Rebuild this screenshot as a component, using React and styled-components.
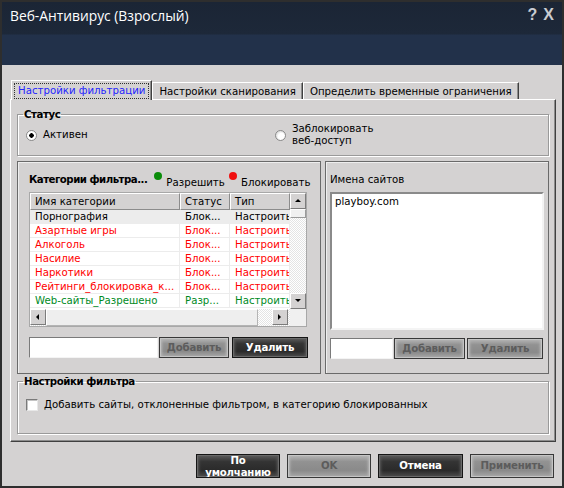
import React from 'react';
import styled, { createGlobalStyle } from 'styled-components';

const GlobalStyle = createGlobalStyle`
  html, body {
    margin: 0;
    padding: 0;
    background: #d4d2d2;
  }
  body {
    font-family: "DejaVu Sans", Verdana, sans-serif;
    font-size: 10.2px;
    color: #000;
  }
  * {
    box-sizing: border-box;
  }
`;

const Window = styled.div`
  width: 564px;
  height: 488px;
  border: 2px solid #2e2e2e;
  background: #d4d2d2;
  display: flex;
  flex-direction: column;
  overflow: hidden;
`;

const TitleBar = styled.div`
  height: 63px;
  flex-shrink: 0;
  background: linear-gradient(180deg, #1b2535 0, #1d2839 32px, #22314a 33px, #22314a 100%);
  display: flex;
  justify-content: space-between;
  align-items: flex-start;
  padding: 4px 8px 0 8px;
`;

const Title = styled.div`
  font-family: "Open Sans", "Noto Sans", sans-serif;
  font-size: 13.8px;
  line-height: 20px;
  color: #ffffff;
`;

const TitleButtons = styled.div`
  display: flex;
  gap: 6px;
  font-family: "Liberation Sans", Arial, sans-serif;
  font-weight: 700;
  font-size: 16px;
  line-height: 16px;
  color: #c9ccd1;
  padding-top: 1px;
`;

const Body = styled.div`
  flex: 1;
  display: flex;
  flex-direction: column;
  padding: 15px 6px 0 8px;
`;

const TabRow = styled.div`
  display: flex;
  align-items: flex-end;
  height: 19px;
  padding-left: 1px;
  position: relative;
  z-index: 1;
`;

const Tab = styled.div`
  height: ${(p) => (p.$active ? '20px' : '17px')};
  margin-bottom: ${(p) => (p.$active ? '-1px' : '0')};
  padding: ${(p) => (p.$active ? '1px 2px 0 2px' : '0 6px')};
  display: flex;
  align-items: center;
  background: #d4d2d2;
  border-top: 1px solid #ffffff;
  border-left: 1px solid #ffffff;
  border-right: 1px solid #404040;
  box-shadow: inset -1px 0 0 #8c8c8c;
  color: ${(p) => (p.$active ? '#2424ff' : '#000')};
  white-space: nowrap;
`;

const FocusText = styled.span`
  border: 1px dotted #303030;
  padding: 1px 3px 2px 3px;
`;

const TabPanel = styled.div`
  height: 343px;
  display: flex;
  flex-direction: column;
  padding: 8px 6px 0 6px;
  border-top: 1px solid #ffffff;
  border-left: 1px solid #ffffff;
  border-right: 1px solid #404040;
  border-bottom: 1px solid #404040;
  box-shadow: inset -1px -1px 0 #8c8c8c;
`;

const Group = styled.fieldset`
  margin: ${(p) => p.$top || 0}px 0 0 0;
  padding: ${(p) => p.$pad};
  border: 1px solid #9a9a9a;
  box-shadow: inset 1px 1px 0 #ffffff, 1px 1px 0 #ffffff;
  min-width: 0;
`;

const Legend = styled.legend`
  font-weight: 700;
  letter-spacing: -0.4px;
  line-height: 13px;
  padding: 0 1px;
  margin-left: -3px;
`;

const RadioRow = styled.div`
  display: grid;
  grid-template-columns: 249px 1fr;
  align-items: center;
  height: 24px;
`;

const RadioLabel = styled.label`
  display: flex;
  align-items: center;
  gap: 6px;
  line-height: 12px;
`;

const Radio = styled.span`
  width: 11px;
  height: 11px;
  border-radius: 50%;
  border: 1px solid #8a8a8a;
  background: ${(p) =>
    p.$checked
      ? 'radial-gradient(circle, #000 0 2px, #fff 2.5px)'
      : 'radial-gradient(circle at 60% 60%, #fff 0 3px, #e4e4e4 5px)'};
  flex-shrink: 0;
`;

const Panels = styled.div`
  display: flex;
  gap: 4px;
  margin-top: 5px;
  height: 213px;
`;

const Panel = styled.div`
  width: ${(p) => (p.$width ? `${p.$width}px` : 'auto')};
  flex: ${(p) => (p.$width ? '0 0 auto' : '1')};
  border: 1px solid #6a6a6a;
  box-shadow: inset 1px 1px 0 #eeeeee;
  display: flex;
  flex-direction: column;
  padding: 0 ${(p) => p.$side}px;
`;

const PanelHeader = styled.div`
  height: 30px;
  display: flex;
  align-items: flex-start;
  padding-top: 11px;
  line-height: 13px;
  white-space: nowrap;
`;

const HeaderTitle = styled.div`
  width: 131px;
  font-weight: ${(p) => (p.$bold ? 700 : 400)};
  letter-spacing: ${(p) => (p.$bold ? '-0.5px' : '0')};
`;

const LegendItem = styled.div`
  display: flex;
  align-items: flex-start;
  width: ${(p) => p.$width}px;
  margin-top: -1px;
`;

const Dot = styled.span`
  width: 8px;
  height: 8px;
  border-radius: 50%;
  background: ${(p) => p.$color};
  margin-right: 4px;
  flex-shrink: 0;
`;

const LegendText = styled.span`
  margin-top: 4px;
`;

const Table = styled.div`
  width: 278px;
  height: 135px;
  border: 1px solid #a8a8a8;
  background: #ffffff;
  display: grid;
  grid-template-columns: 260px 16px;
  grid-template-rows: 116px 17px;
`;

const DataArea = styled.div`
  display: flex;
  flex-direction: column;
  overflow: hidden;
`;

const HeadRow = styled.div`
  display: grid;
  grid-template-columns: 150px 50px 60px;
  height: 17px;
`;

const HeadCell = styled.div`
  background: #d4d2d2;
  border-top: 1px solid #ffffff;
  border-left: 1px solid #ffffff;
  border-right: 1px solid #8c8c8c;
  border-bottom: 1px solid #8c8c8c;
  padding-left: 4px;
  line-height: 15px;
  white-space: nowrap;
  overflow: hidden;
`;

const Row = styled.div`
  display: grid;
  grid-template-columns: 150px 50px 60px;
  height: 14px;
  background: ${(p) => (p.$selected ? '#ececec' : '#ffffff')};
  color: ${(p) => p.$color};
  border-bottom: 1px solid #ececec;
`;

const Cell = styled.div`
  padding-left: 5px;
  line-height: 13px;
  white-space: nowrap;
  overflow: hidden;
  border-right: 1px solid #ececec;
`;

const VScroll = styled.div`
  display: flex;
  flex-direction: column;
  background: repeating-conic-gradient(#e4e4e4 0 25%, #ffffff 0 50%) 0 0 / 2px 2px;
`;

const ScrollButton = styled.div`
  width: 16px;
  height: 16px;
  flex-shrink: 0;
  background: #d4d2d2;
  border: 1px solid;
  border-color: #ffffff #7c7c7c #7c7c7c #ffffff;
  display: flex;
  align-items: center;
  justify-content: center;
`;

const VThumb = styled.div`
  height: 9px;
  flex-shrink: 0;
  background: #f0f0f0;
  border: 1px solid;
  border-color: #ffffff #9a9a9a #9a9a9a #ffffff;
`;

const Spacer = styled.div`
  flex: 1;
`;

const HScroll = styled.div`
  display: flex;
  align-items: stretch;
  background: repeating-conic-gradient(#e4e4e4 0 25%, #ffffff 0 50%) 0 0 / 2px 2px;
  padding-right: 2px;
`;

const HThumb = styled.div`
  flex: 0 0 212px;
  background: #eeeeee;
  border: 1px solid;
  border-color: #ffffff #b4b4b4 #b4b4b4 #ffffff;
`;

const Corner = styled.div`
  background: #f0f0f0;
`;

const ControlRow = styled.div`
  display: flex;
  margin-top: ${(p) => p.$top}px;
  height: 21px;
`;

const TextInput = styled.input`
  width: ${(p) => p.$width}px;
  height: 21px;
  margin: 0;
  border: 1px solid;
  border-color: #7a7a7a #f4f4f4 #f4f4f4 #7a7a7a;
  background: #ffffff;
  padding: 0 3px;
`;

const Button = styled.button`
  width: ${(p) => p.$width}px;
  margin: 0 0 0 ${(p) => p.$gap || 0}px;
  padding: 0;
  font-family: "DejaVu Sans", Verdana, sans-serif;
  font-size: 10.2px;
  font-weight: 700;
  letter-spacing: -0.2px;
  line-height: 12px;
  border: 1px solid ${(p) => (p.$dark ? '#151515' : '#383838')};
  color: ${(p) => (p.$dark ? '#ffffff' : '#5c5c5c')};
  background: ${(p) =>
    p.$dark
      ? 'linear-gradient(180deg, #5e5e5e 0, #343434 30%, #2a2a2a 70%, #4e4e4e 100%)'
      : 'linear-gradient(180deg, #b8b8b8 0, #929292 30%, #8a8a8a 70%, #a8a8a8 100%)'};
  box-shadow: ${(p) =>
    p.$dark
      ? 'inset 0 0 0 1px #6a6a6a, inset 3px 0 3px -1px #5a5a5a, inset -3px 0 3px -1px #5a5a5a'
      : 'inset 0 0 0 1px #c4c4c4, inset 3px 0 3px -1px #b8b8b8, inset -3px 0 3px -1px #b8b8b8'};
  overflow: hidden;
`;

const SiteList = styled.div`
  height: 138px;
  background: #ffffff;
  border: 2px solid;
  border-color: #8a8a8a #f4f4f4 #f4f4f4 #8a8a8a;
  padding: 1px 3px;
  line-height: 14px;
`;

const CheckLabel = styled.label`
  display: flex;
  align-items: center;
  gap: 6px;
  line-height: 13px;
`;

const CheckBox = styled.span`
  width: 12px;
  height: 12px;
  background: #ffffff;
  border: 1px solid;
  border-color: #7a7a7a #e8e8e8 #e8e8e8 #7a7a7a;
  box-shadow: inset 1px 1px 0 #c4c4c4;
  flex-shrink: 0;
`;

const Footer = styled.div`
  display: flex;
  justify-content: flex-end;
  gap: 7px;
  margin-top: 12px;
  padding-right: 2px;
  height: 24px;
`;

const Arrow = ({ dir }) => {
  const pts = {
    up: '1,5 4,2 7,5',
    down: '1,2 4,5 7,2',
    left: '5,1 2,4 5,7',
    right: '2,1 5,4 2,7',
  };
  return (
    <svg width="8" height="8" viewBox="0 0 8 8">
      <polygon points={pts[dir]} fill="#000" />
    </svg>
  );
};

const rows = [
  { name: 'Порнография', status: 'Блок...', color: '#000', selected: true },
  { name: 'Азартные игры', status: 'Блок...', color: '#ff0000' },
  { name: 'Алкоголь', status: 'Блок...', color: '#ff0000' },
  { name: 'Насилие', status: 'Блок...', color: '#ff0000' },
  { name: 'Наркотики', status: 'Блок...', color: '#ff0000' },
  { name: 'Рейтинги_блокировка_к...', status: 'Блок...', color: '#ff0000' },
  { name: 'Web-сайты_Разрешено', status: 'Разр...', color: '#008a1e' },
];

function App() {
  return (
    <>
      <GlobalStyle />
      <Window>
        <TitleBar>
          <Title>Веб-Антивирус (Взрослый)</Title>
          <TitleButtons>
            <span>?</span>
            <span>X</span>
          </TitleButtons>
        </TitleBar>
        <Body>
          <TabRow>
            <Tab $active>
              <FocusText>Настройки фильтрации</FocusText>
            </Tab>
            <Tab>Настройки сканирования</Tab>
            <Tab>Определить временные ограничения</Tab>
          </TabRow>
          <TabPanel>
            <Group $pad="2px 8px 8px 8px">
              <Legend>Статус</Legend>
              <RadioRow>
                <RadioLabel>
                  <Radio $checked />
                  Активен
                </RadioLabel>
                <RadioLabel>
                  <Radio />
                  <span>
                    Заблокировать
                    <br />
                    веб-доступ
                  </span>
                </RadioLabel>
              </RadioRow>
            </Group>

            <Panels>
              <Panel $width={304} $side={11}>
                <PanelHeader>
                  <HeaderTitle $bold>Категории фильтра...</HeaderTitle>
                  <LegendItem $width={78}>
                    <Dot $color="#0a8c0a" />
                    <LegendText>Разрешить</LegendText>
                  </LegendItem>
                  <LegendItem $width={80}>
                    <Dot $color="#f01010" />
                    <LegendText>Блокировать</LegendText>
                  </LegendItem>
                </PanelHeader>
                <Table>
                  <DataArea>
                    <HeadRow>
                      <HeadCell>Имя категории</HeadCell>
                      <HeadCell>Статус</HeadCell>
                      <HeadCell>Тип</HeadCell>
                    </HeadRow>
                    {rows.map((r) => (
                      <Row key={r.name} $color={r.color} $selected={r.selected}>
                        <Cell>{r.name}</Cell>
                        <Cell>{r.status}</Cell>
                        <Cell>Настроить</Cell>
                      </Row>
                    ))}
                  </DataArea>
                  <VScroll>
                    <ScrollButton>
                      <Arrow dir="up" />
                    </ScrollButton>
                    <VThumb />
                    <Spacer />
                    <ScrollButton>
                      <Arrow dir="down" />
                    </ScrollButton>
                  </VScroll>
                  <HScroll>
                    <ScrollButton>
                      <Arrow dir="left" />
                    </ScrollButton>
                    <HThumb />
                    <Spacer />
                    <ScrollButton>
                      <Arrow dir="right" />
                    </ScrollButton>
                  </HScroll>
                  <Corner />
                </Table>
                <ControlRow $top={10}>
                  <TextInput $width={129} />
                  <Button $width={70} $gap={1}>Добавить</Button>
                  <Button $width={76} $gap={3} $dark>Удалить</Button>
                </ControlRow>
              </Panel>

              <Panel $side={4}>
                <PanelHeader>
                  <HeaderTitle>Имена сайтов</HeaderTitle>
                </PanelHeader>
                <SiteList>playboy.com</SiteList>
                <ControlRow $top={8}>
                  <TextInput $width={63} />
                  <Button $width={71} $gap={1}>Добавить</Button>
                  <Button $width={76} $gap={2}>Удалить</Button>
                </ControlRow>
              </Panel>
            </Panels>

            <Group $top={1} $pad="10px 8px 22px 8px">
              <Legend>Настройки фильтра</Legend>
              <CheckLabel>
                <CheckBox />
                Добавить сайты, отклоненные фильтром, в категорию блокированных
              </CheckLabel>
            </Group>
          </TabPanel>

          <Footer>
            <Button $width={84} $dark>
              По
              <br />
              умолчанию
            </Button>
            <Button $width={84}>OK</Button>
            <Button $width={85} $dark>Отмена</Button>
            <Button $width={84}>Применить</Button>
          </Footer>
        </Body>
      </Window>
    </>
  );
}

export default App;
